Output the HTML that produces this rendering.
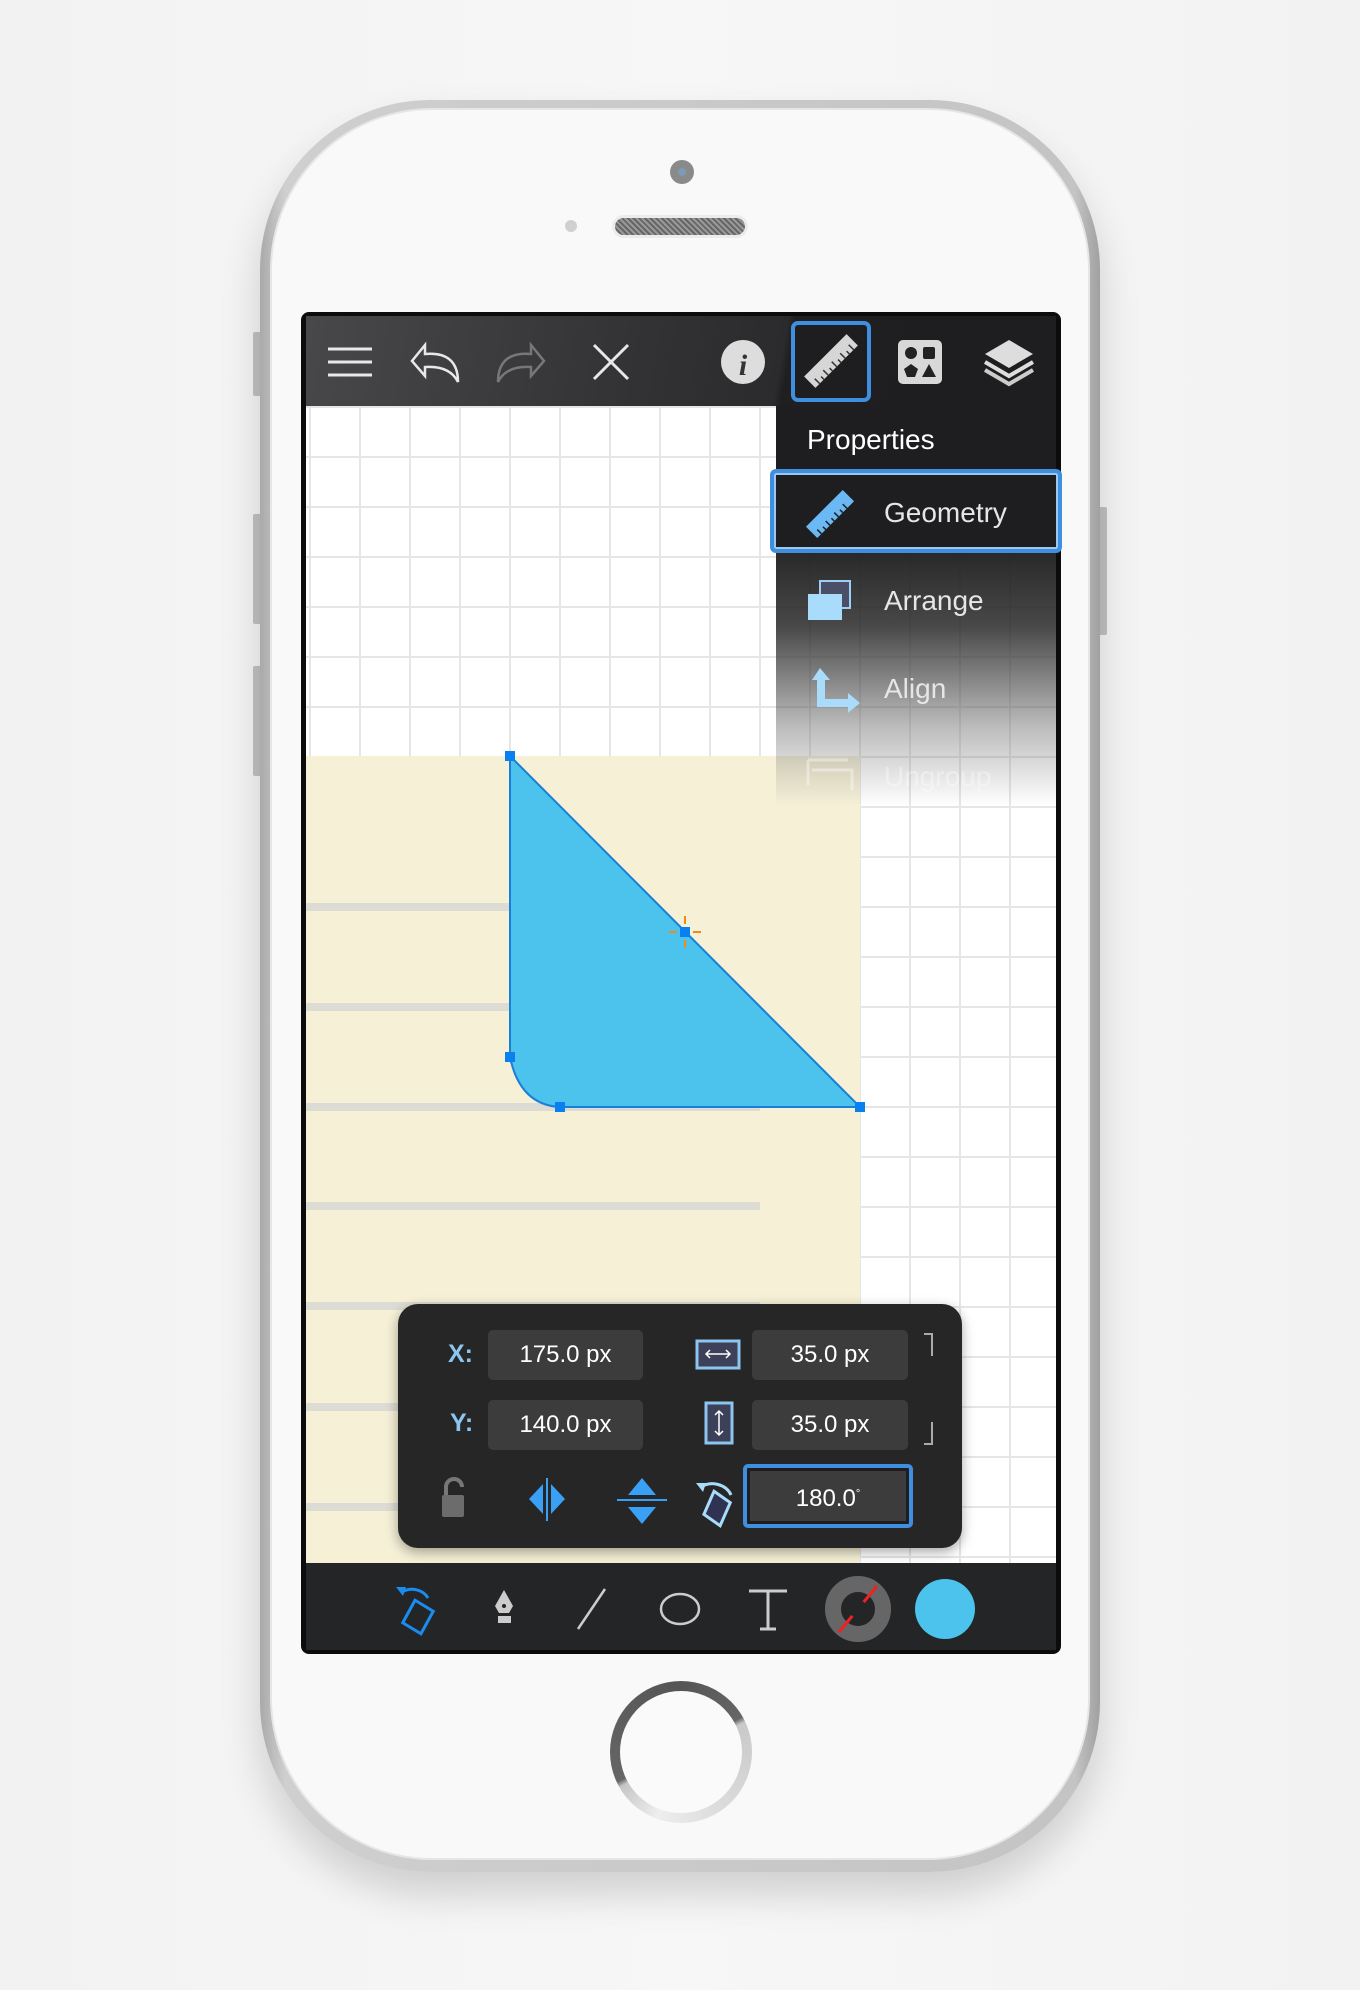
<!DOCTYPE html>
<html><head><meta charset="utf-8"><style>
*{margin:0;padding:0;box-sizing:border-box}
body{width:1360px;height:1990px;background:linear-gradient(90deg,#f2f2f2,#f7f7f7 50%,#f2f2f2);position:relative;overflow:hidden;font-family:"Liberation Sans",sans-serif}
.abs{position:absolute}
.phone{left:260px;top:100px;width:840px;height:1772px;border-radius:170px;background:linear-gradient(90deg,#a9a9a9,#cfcfcf 3%,#c4c4c4 97%,#a0a0a0);box-shadow:0 22px 40px rgba(0,0,0,.16)}
.phone .in{position:absolute;left:12px;top:10px;right:12px;bottom:14px;border-radius:160px;background:#f9f9f9;box-shadow:0 0 0 2px #e6e6e6}
.btn{background:#c0c0c0;border-radius:2px}
.screen{left:301px;top:312px;width:760px;height:1342px;background:#0c0c0c;border-radius:8px;overflow:hidden}
.canvas{left:306px;top:406px;width:750px;height:1157px;background-color:#fff;
background-image:linear-gradient(90deg,#e6e6e6 2px,transparent 2px),linear-gradient(#e6e6e6 2px,transparent 2px);
background-size:50px 50px;background-position:53px 50px;overflow:hidden}
.tb{left:306px;top:316px;width:750px;height:90px;background:linear-gradient(100deg,#48484b 0%,#323234 45%,#2b2b2d 63%,#1f1f21 64%,#1e1e20 100%)}
.menu{left:776px;top:406px;width:280px;height:400px;background:linear-gradient(#1e1e20 0%,#1e1e20 30%,rgba(40,40,40,.85) 55%,rgba(120,120,120,.5) 80%,rgba(255,255,255,0) 100%)}
.mt{color:#fff;font-size:28px}
.mi{color:#e6e6e6;font-size:28px}
.panel{left:398px;top:1304px;width:564px;height:244px;background:#262626;border-radius:20px;box-shadow:0 4px 12px rgba(0,0,0,.35)}
.fld{background:#3c3c3c;border-radius:5px;color:#fff;font-size:24px;text-align:center;line-height:50px;height:50px}
.lbl{color:#8cc6f0;font-size:25px;font-weight:bold}
.bb{left:306px;top:1563px;width:750px;height:87px;background:#242527}
</style></head><body>
<div class="abs btn" style="left:253px;top:332px;width:8px;height:64px"></div>
<div class="abs btn" style="left:253px;top:514px;width:8px;height:110px"></div>
<div class="abs btn" style="left:253px;top:666px;width:8px;height:110px"></div>
<div class="abs btn" style="left:1099px;top:507px;width:8px;height:128px"></div>
<div class="abs phone"><div class="in"></div></div>
<div class="abs" style="left:670px;top:160px;width:24px;height:24px;border-radius:50%;background:#8a8a8a"><div style="margin:8px;width:8px;height:8px;border-radius:50%;background:#7f9ab5"></div></div>
<div class="abs" style="left:565px;top:220px;width:12px;height:12px;border-radius:50%;background:#d0d0d0"></div>
<div class="abs" style="left:615px;top:218px;width:130px;height:17px;border-radius:9px;background:repeating-linear-gradient(45deg,#666 0 2px,#999 2px 4px);box-shadow:0 0 0 3px #ececec"></div>
<div class="abs" style="left:610px;top:1681px;width:142px;height:142px;border-radius:50%;background:conic-gradient(from 0deg,#555 0deg,#666 60deg,#c9c9c9 65deg,#ddd 150deg,#eee 200deg,#c6c6c6 240deg,#666 245deg,#555 360deg)"><div style="margin:10px;width:122px;height:122px;border-radius:50%;background:#fafafa"></div></div>

<div class="abs screen"></div>
<div class="abs tb"></div>
<div class="abs canvas">
 <div class="abs" style="left:0;top:350px;width:554px;height:807px;background:#f5f0d6"></div>
 <div class="abs" style="left:0;top:497px;width:204px;height:8px;background:#dcdcd4"></div>
 <div class="abs" style="left:0;top:597px;width:204px;height:8px;background:#dcdcd4"></div>
 <div class="abs" style="left:0;top:697px;width:454px;height:8px;background:#dcdcd4"></div>
 <div class="abs" style="left:0;top:796px;width:454px;height:8px;background:#dcdcd4"></div>
 <div class="abs" style="left:0;top:896px;width:454px;height:8px;background:#dcdcd4"></div>
 <div class="abs" style="left:0;top:997px;width:454px;height:8px;background:#dcdcd4"></div>
 <div class="abs" style="left:0;top:1097px;width:454px;height:8px;background:#dcdcd4"></div>
</div>
<svg class="abs" style="left:0;top:0" width="1360" height="1990">
 <path d="M510 756 L860 1107 L560 1107 Q520 1105 510 1057 Z" fill="#4bc3ec" stroke="#1a7fd6" stroke-width="2"/>
 <g fill="#0a7ff0"><rect x="505" y="751" width="10" height="10"/><rect x="505" y="1052" width="10" height="10"/><rect x="555" y="1102" width="10" height="10"/><rect x="855" y="1102" width="10" height="10"/><rect x="680" y="927" width="10" height="10"/></g>
 <g stroke="#f08a1e" stroke-width="2"><line x1="669" y1="932" x2="677" y2="932"/><line x1="693" y1="932" x2="701" y2="932"/><line x1="685" y1="916" x2="685" y2="924"/><line x1="685" y1="940" x2="685" y2="948"/></g>
</svg>
<div class="abs menu"></div>
<div class="abs mt" style="left:807px;top:424px">Properties</div>
<div class="abs" style="left:770px;top:469px;width:292px;height:84px;border:4px solid #3f8fe0;border-radius:6px;background:#1e1e20;box-shadow:inset 0 0 0 2px #9cc8f0"></div>
<div class="abs mi" style="left:884px;top:497px">Geometry</div>
<div class="abs mi" style="left:884px;top:585px">Arrange</div>
<div class="abs mi" style="left:884px;top:673px">Align</div>
<div class="abs mi" style="left:884px;top:761px;color:rgba(255,255,255,.35)">Ungroup</div>
<svg class="abs" style="left:0;top:0" width="1360" height="1990">
 <g stroke="#e8e8e8" stroke-width="3" fill="none">
  <line x1="328" y1="349" x2="372" y2="349"/><line x1="328" y1="362" x2="372" y2="362"/><line x1="328" y1="375" x2="372" y2="375"/>
  <path d="M458 382 C458 360 445 352 425 354 L425 345 L412 361 L425 376 L425 367 C440 366 452 370 458 382 Z" stroke-width="2.5"/>
  <path d="M498 382 C498 360 511 352 531 354 L531 345 L544 361 L531 376 L531 367 C516 366 504 370 498 382 Z" stroke="#777" stroke-width="2.5"/>
  <line x1="594" y1="345" x2="628" y2="379"/><line x1="628" y1="345" x2="594" y2="379"/>
 </g>
 <circle cx="743" cy="362" r="22" fill="#ddd"/><text x="743" y="375" font-family="Liberation Serif" font-style="italic" font-weight="bold" font-size="30" fill="#333" text-anchor="middle">i</text>
 <rect x="793" y="323" width="76" height="77" rx="5" fill="#1e1e20" stroke="#3f8fe0" stroke-width="4"/>
 <g transform="translate(831 361) rotate(-45)"><rect x="-30" y="-8" width="60" height="16" fill="#d6d6d6"/><path d="M-24 8v-7M-18 8v-4M-12 8v-7M-6 8v-4M0 8v-7M6 8v-4M12 8v-7M18 8v-4M24 8v-7" stroke="#333" stroke-width="1.5"/></g>
 <rect x="898" y="340" width="44" height="44" rx="5" fill="#d8d8d8"/>
 <circle cx="911" cy="353" r="6" fill="#222"/><rect x="923" y="347" width="12" height="12" rx="2" fill="#222"/><path d="M911 364l7 5-3 8h-8l-3-8z" fill="#222"/><path d="M929 364l7 13h-14z" fill="#222"/>
 <path d="M1009 340l24 14-24 14-24-14z" fill="#ddd"/><path d="M985 362l24 14 24-14" stroke="#ddd" stroke-width="4" fill="none"/><path d="M985 370l24 14 24-14" stroke="#ccc" stroke-width="4" fill="none"/>
 <g transform="translate(830 514) rotate(-45)"><rect x="-26" y="-8" width="52" height="16" fill="#6ab8f4"/><path d="M-20 8v-6M-14 8v-4M-8 8v-6M-2 8v-4M4 8v-6M10 8v-4M16 8v-6" stroke="#1e1e20" stroke-width="1.5"/></g>
 <rect x="820" y="581" width="30" height="27" fill="#4a4e66" stroke="#9cd0f5" stroke-width="2"/>
 <rect x="808" y="594" width="34" height="26" fill="#a9dbfb"/>
 <path d="M820 668l-8 12h5v27h31v6l12-10-12-10v6h-23v-19h5z" fill="#a9dbfb"/>
 <path d="M808 760h40M812 770h40v20M808 760v25" stroke="rgba(255,255,255,.4)" stroke-width="3" fill="none"/>
</svg>

<div class="abs panel"></div>
<div class="abs lbl" style="left:448px;top:1340px">X:</div>
<div class="abs lbl" style="left:450px;top:1409px">Y:</div>
<div class="abs fld" style="left:488px;top:1330px;width:155px">175.0 px</div>
<div class="abs fld" style="left:488px;top:1400px;width:155px">140.0 px</div>
<div class="abs fld" style="left:752px;top:1330px;width:156px">35.0 px</div>
<div class="abs fld" style="left:752px;top:1400px;width:156px">35.0 px</div>
<div class="abs" style="left:743px;top:1464px;width:170px;height:64px;border:4px solid #3f8fe0;border-radius:5px;background:#3c3c3c;box-shadow:inset 0 0 0 3px #1e1e20"></div>
<div class="abs" style="left:743px;top:1462px;width:170px;height:64px;color:#fff;font-size:24px;text-align:center;line-height:64px">180.0<sup style="font-size:11px">°</sup></div>
<svg class="abs" style="left:0;top:0" width="1360" height="1990">
 <rect x="697" y="1341" width="42" height="27" fill="#3c4058" stroke="#8cc6f0" stroke-width="3"/>
 <path d="M706 1354h24M710 1350l-4 4 4 4M726 1350l4 4-4 4" stroke="#fff" stroke-width="1.5" fill="none"/>
 <rect x="706" y="1403" width="26" height="40" fill="#3c4058" stroke="#8cc6f0" stroke-width="3"/>
 <path d="M719 1411v24M715 1415l4-4 4 4M715 1431l4 4 4-4" stroke="#fff" stroke-width="1.5" fill="none"/>
 <path d="M924 1334h8v22M924 1444h8v-22" stroke="#aaa" stroke-width="2" fill="none"/>
 <path d="M446 1495v-8a8 8 0 0 1 16 0" stroke="#777" stroke-width="4" fill="none"/>
 <rect x="442" y="1495" width="22" height="22" rx="2" fill="#6c6c6c"/>
 <line x1="547" y1="1478" x2="547" y2="1521" stroke="#3aa0f5" stroke-width="2"/>
 <path d="M543 1484l-14 15 14 15zM551 1484l14 15-14 15z" fill="#3aa0f5"/>
 <line x1="617" y1="1500" x2="667" y2="1500" stroke="#3aa0f5" stroke-width="2"/>
 <path d="M642 1478l-14 17h28zM642 1524l-14-17h28z" fill="#3aa0f5"/>
 <path d="M701 1487a20 18 0 0 1 30 8" stroke="#a9dbfb" stroke-width="3" fill="none"/><path d="M696 1483l10 0-3 9z" fill="#a9dbfb"/>
 <path d="M717 1491l14 14-14 21-14-14z" fill="#2f3250" stroke="#a9dbfb" stroke-width="3" transform="rotate(-10 717 1508)"/>
</svg>
<div class="abs bb"></div>
<svg class="abs" style="left:0;top:0" width="1360" height="1990">
 <path d="M402 1592a18 16 0 0 1 26 6" stroke="#1a8cf0" stroke-width="3" fill="none"/><path d="M396 1587l10 0-3 9z" fill="#1a8cf0"/>
 <path d="M418 1600l16 14-16 20-16-14z" fill="none" stroke="#1a8cf0" stroke-width="3" transform="rotate(-10 418 1617)"/>
 <path d="M504 1590l-9 16 4 7h10l4-7z" fill="#ccc"/><circle cx="504" cy="1606" r="2" fill="#242527"/><rect x="498" y="1616" width="13" height="7" fill="#ccc"/>
 <line x1="605" y1="1589" x2="578" y2="1629" stroke="#ccc" stroke-width="2.5"/>
 <ellipse cx="680" cy="1609" rx="19" ry="15" fill="none" stroke="#ccc" stroke-width="2.5"/>
 <path d="M749 1591h38M768 1591v38M760 1629h16" stroke="#ccc" stroke-width="3" fill="none"/>
 <circle cx="858" cy="1609" r="25" fill="none" stroke="#666" stroke-width="16"/>
 <line x1="839" y1="1632" x2="877" y2="1586" stroke="#e22" stroke-width="3"/>
 <circle cx="858" cy="1609" r="9" fill="#242527"/>
 <ellipse cx="945" cy="1609" rx="30" ry="30" fill="#4bc3ec"/>
</svg>
</body></html>
